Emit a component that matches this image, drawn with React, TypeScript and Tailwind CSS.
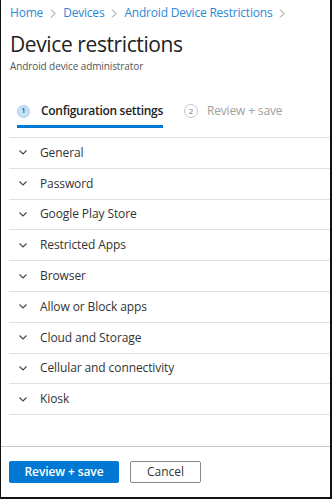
import React from "react";

const sections = [
  "General",
  "Password",
  "Google Play Store",
  "Restricted Apps",
  "Browser",
  "Allow or Block apps",
  "Cloud and Storage",
  "Cellular and connectivity",
  "Kiosk",
];

const Chevron = ({ className = "" }: { className?: string }) => (
  <svg width="8" height="5" viewBox="0 0 8 5" className={className}>
    <path d="M0.5 0.5 L4 4 L7.5 0.5" fill="none" stroke="#444" strokeWidth="1.1" />
  </svg>
);

const Crumb = ({ label }: { label: string }) => (
  <span className="flex items-center">
    <span className="text-[#2b88d8]">{label}</span>
    <svg width="6" height="9" viewBox="0 0 6 9" className="mx-[7px]">
      <path d="M1 0.5 L5 4.5 L1 8.5" fill="none" stroke="#888" strokeWidth="1" />
    </svg>
  </span>
);

export default function App() {
  return (
    <div
      className="w-[332px] h-[499px] bg-white border-l border-r-2 border-b-2 border-[#111] flex flex-col text-[#323130]"
      style={{ fontFamily: '"Open Sans", "Noto Sans", sans-serif' }}
    >
      {/* header */}
      <div className="px-[9px] pt-[4px]">
        <div className="flex items-center text-[12px] leading-[18px] tracking-[-0.2px]">
          <Crumb label="Home" />
          <Crumb label="Devices" />
          <Crumb label="Android Device Restrictions" />
        </div>
        <h1 className="text-[21px] leading-[26px] mt-[9px] text-[#222] tracking-[-0.4px]">
          Device restrictions
        </h1>
        <p className="text-[10px] leading-[14px] mt-[2px] text-[#555] tracking-[-0.1px]">
          Android device administrator
        </p>
      </div>

      {/* steps */}
      <div className="flex items-end mt-[26px] px-[16px]">
        <div className="flex flex-col">
          <div className="flex items-center h-[24px]">
            <span className="w-[13px] h-[13px] rounded-full bg-[#c7e0f4] border border-[#a9cdee] text-[7px] font-semibold text-[#1f4e79] flex items-center justify-center">
              1
            </span>
            <span className="ml-[11px] text-[12px] font-semibold text-[#222] tracking-[-0.3px]">
              Configuration settings
            </span>
          </div>
          <div className="h-[3px] bg-[#0078d4] mt-[2px]" />
        </div>
        <div className="flex items-center h-[24px] ml-[21px] mb-[5px]">
          <span className="w-[14px] h-[14px] rounded-full border border-[#c8c8c8] text-[8px] text-[#777] flex items-center justify-center">
            2
          </span>
          <span className="ml-[9px] text-[12px] text-[#a19f9d] tracking-[-0.15px]">
            Review + save
          </span>
        </div>
      </div>

      {/* sections */}
      <div className="ml-[8px] mt-[9px] border-t border-[#e1e1e1]">
        {sections.map((s) => (
          <div
            key={s}
            className="h-[30.8px] flex items-center border-b border-[#e1e1e1] pl-[10px]"
          >
            <Chevron />
            <span className="ml-[13px] text-[12px] text-[#333] tracking-[-0.1px]">{s}</span>
          </div>
        ))}
      </div>

      <div className="flex-1" />

      {/* footer */}
      <div className="border-t border-[#c8c8c8] h-[51px] flex items-center px-[8px] gap-[11px]">
        <button className="w-[110px] h-[22px] bg-[#0078d4] text-white text-[12px] font-semibold rounded-[2px] tracking-[-0.1px]">
          Review + save
        </button>
        <button className="w-[71px] h-[22px] bg-white border border-[#8a8886] text-[#333] text-[12px] rounded-[2px]">
          Cancel
        </button>
      </div>
    </div>
  );
}
